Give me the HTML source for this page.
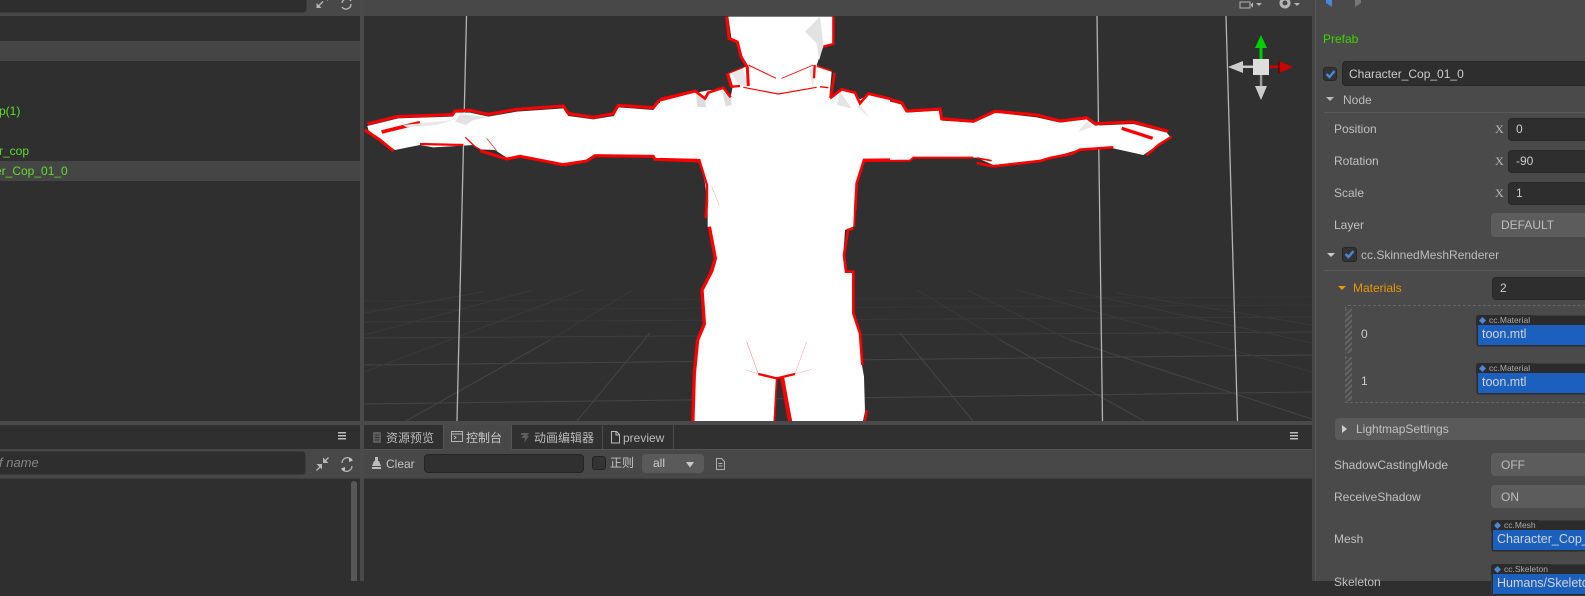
<!DOCTYPE html>
<html><head><meta charset="utf-8">
<style>
*{box-sizing:border-box}
html,body{margin:0;padding:0;background:#2f2f2f}
body{width:1585px;height:581px;overflow:hidden;position:relative;font-family:"Liberation Sans","Noto Sans CJK SC",sans-serif;font-size:12px;color:#ccc}
.a{position:absolute}
.t{position:absolute;white-space:nowrap;line-height:16px;height:16px}
.inp{position:absolute;background:#2e2e2e;border:1px solid #262626;border-radius:4px}
.sel{position:absolute;background:#5c5c5c;border-radius:4px}
.g{color:#62dc2e;font-size:12px}
.asset{position:absolute;background:#2b2b2b;border:1px solid #3a3a3a;border-radius:3px;height:32px}
.tag{position:absolute;left:-1px;top:-1px;height:11px;background:#2b2b2b;border-radius:3px 3px 0 0;font-size:8.5px;line-height:10px;color:#aaa;padding-left:13px}
.tag:before{content:"";position:absolute;left:4px;top:3px;width:5px;height:5px;background:#4d86d8;transform:rotate(45deg)}
.blue{position:absolute;left:1px;top:9px;right:0;height:20px;background:#1a60bc;color:#d3d3d3;font-size:12.5px;line-height:19px;padding-left:4px;white-space:nowrap;overflow:hidden}
svg{position:absolute;overflow:hidden}
</style></head><body>

<!-- left column -->
<div class="a" style="left:0;top:0;width:361px;height:16px;background:#484848"></div>
<div class="inp" style="left:-6px;top:-8px;width:313px;height:21px;background:#2e2e2e;border-color:#3a3a3a"></div>
<div class="a" style="left:0;top:41px;width:360px;height:20px;background:#454545"></div>
<div class="a" style="left:0;top:161px;width:360px;height:20px;background:#454545"></div>
<div class="t g" style="left:-1px;top:103px">p(1)</div>
<div class="t g" style="left:-1px;top:143px">r_cop</div>
<div class="t g" style="left:-5px;top:163px">er_Cop_01_0</div>

<div class="a" style="left:0;top:449px;width:361px;height:30px;background:#484848;border-bottom:1px solid #3e3e3e"></div>
<div class="inp" style="left:-6px;top:451px;width:312px;height:24px;border-color:#3a3a3a"></div>
<div class="t" style="left:-1px;top:455px;color:#858585;font-style:italic;font-size:13px">f name</div>
<div class="a" style="left:351px;top:481px;width:6px;height:100px;background:#585858;border-radius:3px 3px 0 0"></div>

<!-- dividers -->
<div class="a" style="left:360px;top:0;width:4px;height:581px;background:#4a4a4a"></div>
<div class="a" style="left:0;top:421px;width:1312px;height:4px;background:#4a4a4a"></div>

<!-- viewport -->
<div class="a" style="left:364px;top:0;width:948px;height:16px;background:#484848"></div>
<svg style="left:0;top:0" width="1585" height="581" viewBox="0 0 1585 581">
<defs><clipPath id="vp"><rect x="364" y="16" width="948" height="405"/></clipPath></defs>
<g clip-path="url(#vp)">
<rect x="364" y="16" width="948" height="405" fill="#303030"/>
<g fill="none" stroke-width="1">
<path d="M364 404L1312 392M364 365L1312 355" stroke="#454545"/>
<path d="M364 338L1312 332" stroke="#3f3f3f"/>
<path d="M364 322L1312 317" stroke="#3a3a3a"/>
<path d="M364 310L1312 305M364 301L1312 297" stroke="#363636"/>
<path d="M900 333L973 421M1000 340L1144 421M1070 340L1312 419" stroke="#454545"/>
<path d="M917 290L1000 340M967 290L1070 340M1017 290L1312 372M1067 290L1312 343M1117 293L1312 325" stroke="#3a3a3a"/>
<path d="M650 333L577 421M550 340L406 421" stroke="#454545"/>
<path d="M633 290L550 340M583 290L364 372M533 290L364 335M483 292L364 313" stroke="#3a3a3a"/>
</g>
<g stroke="#b4b4b4" stroke-width="1.3" fill="none">
<path d="M466.5 16L457 421M1097 16L1102.5 421M1226 16L1237.5 421"/>
</g>

<!-- left arm (zoom coords) -->
<g transform="translate(360,90) scale(.33333)">
<polygon fill="#fff" points="22,108 115,85 275,80 285,68 330,68 385,80 470,65 612,55 625,78 700,88 762,78 775,52 880,60 895,40 1010,8 1050,0 1080,0 1080,360 1048,360 1045,285 1020,212 885,207 880,198 705,195 680,212 610,220 480,197 440,203 405,180 360,178 340,165 220,172 180,165 105,180 60,150 25,120"/>
<g fill="none" stroke="#f00" stroke-linejoin="miter">
<polyline stroke-width="9" points="22,102 110,80 275,74"/>
<polyline stroke-width="9" points="275,78 285,63 330,61 385,73 470,58 610,48 625,71 700,82 760,71 775,46 880,53 895,34 1010,3"/>
<polyline stroke-width="9" points="14,120 60,150 100,183"/>
<polyline stroke-width="7" points="180,162 310,165"/>
<polyline stroke-width="9" points="360,182 440,207 480,199 610,224 680,213 705,197 880,199 885,208 1018,213 1045,285 1047,360"/>
<polyline stroke-width="11" points="65,126 180,98"/>
<polyline stroke-width="4" points="316,142 345,170 360,178"/>
<polyline stroke-width="2" points="380,145 410,182"/>
</g>
<polygon fill="#e2e2e2" points="285,95 300,72 385,82 340,90 318,105"/>
<polygon fill="#e8e8e8" points="130,105 280,90 230,105 140,112"/>
<polygon fill="#e4e4e4" points="1005,15 1040,50 1010,55"/>
</g>

<!-- right arm -->
<g transform="translate(800,90) scale(.33333)">
<polygon fill="#fff" points="0,0 85,0 90,45 165,40 210,18 305,44 320,68 420,62 425,92 520,98 585,68 710,82 780,98 860,88 885,107 1000,102 1100,128 1110,140 1030,195 940,175 840,178 815,185 750,205 720,212 580,225 530,203 340,203 330,210 190,212 170,260 164,360 0,360"/>
<g fill="none" stroke="#f00">
<polyline stroke-width="9" points="180,42 210,12 305,38 320,63 420,57 425,86 520,94 585,64 710,75 780,93 860,83 885,101 1000,96 1105,124"/>
<polyline stroke-width="7" points="1115,140 1075,165 1040,196"/>
<polyline stroke-width="8" points="940,172 840,179 815,191 750,204 720,213 580,229 530,219"/>
<polyline stroke-width="5" points="530,204 575,212"/>
<polyline stroke-width="6" points="520,203 340,203 330,212 190,213 172,260 164,360"/>
<polyline stroke-width="10" points="965,115 1058,145"/>
</g>
<polygon fill="#e6e6e6" points="835,125 860,95 880,110"/>
<polygon fill="#e4e4e4" points="155,55 185,40 205,85"/>
</g>

<!-- torso -->
<g transform="translate(660,10) scale(.33333)">
<polygon fill="#fff" points="205,20 520,20 518,100 490,110 470,165 515,185 508,262 540,240 585,250 600,268 625,255 690,270 690,450 612,452 590,520 582,600 145,600 135,520 120,452 0,447 0,275 105,248 135,262 150,248 190,237 212,262 218,230 205,190 258,170 245,140 235,100 215,90"/>
<polygon fill="#e2e2e2" points="435,65 480,20 490,105 478,150 470,100"/>
<polygon fill="#e8e8e8" points="215,190 250,178 262,225 235,225"/>
<polygon fill="#dcdcdc" points="108,252 135,262 138,292 112,290"/>
<polygon fill="#dcdcdc" points="186,245 212,262 215,285 198,290"/>
<polygon fill="#e4e4e4" points="540,245 575,295 530,285"/>
<polygon fill="#e8e8e8" points="600,285 630,325 590,290"/>
<polygon fill="#e4e4e4" points="448,180 470,170 458,230"/>
<g fill="none" stroke="#f00">
<polyline stroke-width="9" points="200,20 207,85 232,96 243,140 262,172 265,228"/>
<polyline stroke-width="10" points="202,190 215,232"/>
<polyline stroke-width="4" points="205,190 250,172"/>
<polyline stroke-width="7" points="215,230 240,228"/>
<polyline stroke-width="7" points="520,20 520,102 490,110"/>
<polyline stroke-width="7" points="464,165 462,205"/>
<polyline stroke-width="5" points="470,168 515,183"/>
<polyline stroke-width="8" points="524,188 512,262"/>
<polyline stroke-width="8" points="0,268 105,243 138,268"/>
<polyline stroke-width="8" points="135,265 145,248 190,233 212,262"/>
<polyline stroke-width="8" points="510,265 545,238 585,248 600,280 625,251 690,266"/>
<polyline stroke-width="3" points="265,165 348,205"/>
<polyline stroke-width="2.5" points="365,205 460,165"/>
<polyline stroke-width="3.5" points="250,232 355,252 470,232"/>
<polyline stroke-width="4" points="480,230 505,233"/>
<polyline stroke-width="7" points="0,447 118,450 141,525 141,600"/>
<polyline stroke-width="8" points="690,449 612,450 590,520 586,600"/>
</g>
</g>

<!-- lower -->
<g transform="translate(660,200) scale(.33333)">
<polygon fill="#fff" points="143,0 585,0 580,80 555,90 550,165 555,215 578,215 578,340 600,400 605,490 612,530 615,635 605,680 400,680 370,535 350,535 340,680 100,680 105,520 110,430 135,375 128,270 160,215 170,180 150,85 143,80"/>
<g fill="none" stroke="#f00">
<polyline stroke-width="8" points="141,0 137,55"/>
<polyline stroke-width="10" points="148,80 166,175 153,218 126,270 133,372 113,420 103,520 98,680"/>
<polyline stroke-width="6" points="586,0 583,80"/>
<polyline stroke-width="8" points="580,85 564,90 552,165 558,215 580,215 580,340 600,400 607,495"/>
<polyline stroke-width="7" points="620,630 612,680"/>
<polyline stroke-width="7" points="295,522 350,535 405,522"/>
<polyline stroke-width="5" points="350,535 342,680"/>
<polyline stroke-width="12" points="366,530 393,680"/>
<polyline stroke-width="1.5" stroke-opacity=".55" points="260,425 295,522"/>
<polyline stroke-width="1.5" stroke-opacity=".4" points="405,522 440,425"/>
<polyline stroke-width="1.5" stroke-opacity=".4" points="258,510 295,522"/>
<polyline stroke-width="1.5" stroke-opacity=".4" points="405,522 455,508"/>
<polyline stroke-width="1.5" stroke-opacity=".4" points="155,-40 178,16"/>
</g>
</g>

<!-- gizmo -->
<path d="M1259.5 48h3v11h-3z" fill="#0c0"/>
<path d="M1261 35l6 13h-12z" fill="#00d000"/>
<path d="M1269 65.500h10v2.500h-10z" fill="#c00"/>
<path d="M1279 61l14 6-14 6z" fill="#cd0000"/>
<path d="M1279 61v12" stroke="#400" stroke-width="1"/>
<path d="M1243 65.500h10v2.500h-10z" fill="#ccc"/>
<path d="M1228 67l15-6v12z" fill="#ccc"/>
<path d="M1259.800 75h2.500v11h-2.500z" fill="#999"/>
<path d="M1255 86h12l-6 14z" fill="#ccc"/>
<rect x="1253" y="59" width="16" height="16" fill="#ddd"/>
</g>

<!-- viewport toolbar icons -->
<g fill="#b5b5b5">
<path d="M1240 2h10v6h-10z" fill="none" stroke="#b5b5b5"/>
<path d="M1251 4l2-1.500v5l-2-1.500z"/>
<path d="M1256 3h6l-3 3z"/>
<circle cx="1285" cy="3" r="4" fill="none" stroke="#b5b5b5" stroke-width="3"/>
<path d="M1294 3h6l-3 3z"/>
</g>
</svg>

<!-- bottom tabs -->
<div class="a" style="left:364px;top:425px;width:948px;height:24px;background:#303030"></div>
<div class="a" style="left:443px;top:425px;width:69px;height:25px;background:#484848;border-left:1px solid #555;border-right:1px solid #555"></div>
<div class="a" style="left:602px;top:425px;width:1px;height:24px;background:#4e4e4e"></div>
<div class="a" style="left:673px;top:425px;width:1px;height:24px;background:#4e4e4e"></div>
<div class="a" style="left:364px;top:449px;width:948px;height:30px;background:#484848;border-bottom:1px solid #3e3e3e"></div>
<div class="a" style="left:364px;top:449px;width:79px;height:1px;background:#555"></div>
<div class="a" style="left:512px;top:449px;width:800px;height:1px;background:#555"></div>
<div class="t" style="left:386px;top:430px;color:#bbb">资源预览</div>
<div class="t" style="left:466px;top:430px;color:#c8c8c8">控制台</div>
<div class="t" style="left:534px;top:430px;color:#bbb">动画编辑器</div>
<div class="t" style="left:623px;top:430px;color:#bbb">preview</div>
<div class="t" style="left:386px;top:456px;color:#c4c4c4">Clear</div>
<div class="inp" style="left:424px;top:454px;width:160px;height:19px;background:#303030"></div>
<div class="a" style="left:592px;top:456px;width:14px;height:14px;border:1px solid #242424;background:#333;border-radius:3px"></div>
<div class="t" style="left:610px;top:455px;color:#c4c4c4">正则</div>
<div class="sel" style="left:642px;top:454px;width:62px;height:19px;background:#5a5a5a"></div>
<div class="t" style="left:653px;top:455px;color:#ccc">all</div>

<svg style="left:0;top:0;pointer-events:none" width="1585" height="581" viewBox="0 0 1585 581">
<g fill="#b8b8b8">
<!-- expand top -->
<path d="M316.500 8V3l5 5z"/>
<path d="M328-4v5l-5-5z"/>
<!-- compress lower -->
<path d="M322 464v5.500l-5.500-5.500z"/>
<path d="M323 463v-5.500l5.500 5.500z"/>
</g>
<g fill="none" stroke="#b8b8b8" stroke-width="1.3">
<path d="M318 6.500L323 1.500"/>
<path d="M320 467L316.500 470.500M325 461L328.500 457.500"/>
<path d="M342 3a5 5 0 0 1 9-2M351 4a5 5 0 0 1-9 3"/>
<path d="M342 463a5.500 5.500 0 0 1 10-3M352 466a5.500 5.500 0 0 1-10 3"/>
</g>
<g fill="#c4c4c4"><path d="M349 458l4 2.500-4 1.500zM345 471l-4-2.500 4-1.500z"/></g>
<g fill="#bcbcbc">
<rect x="338" y="432" width="8" height="1.500"/><rect x="338" y="435" width="8" height="1.500"/><rect x="338" y="438" width="8" height="1.500"/>
<rect x="1290" y="432" width="8" height="1.500"/><rect x="1290" y="435" width="8" height="1.500"/><rect x="1290" y="438" width="8" height="1.500"/>
<!-- broom -->
<path d="M375 457h3v4h-3zM374 461h5l2 5h-9zM372 467h9v2h-9z"/>
<path d="M686 462h8l-4 5.500z" fill="#c9c9c9"/>
</g>
<!-- tab icons -->
<rect x="373" y="432" width="8" height="11" rx="1" fill="#5c5c5c"/>
<path d="M375 435h4M375 437.500h4M375 440h4" stroke="#333" stroke-width="1"/>
<rect x="451.500" y="431.500" width="11" height="10" fill="none" stroke="#b5b5b5"/>
<path d="M451 434h12" stroke="#b5b5b5"/>
<path d="M454 436l2 1.500-2 1.500" fill="none" stroke="#b5b5b5"/>
<path d="M521 433h8l-2 3h2l-5 7 1-5h-4l3-3h-3z" fill="#5e5e5e"/>
<path d="M611.500 431.500h5l3 3v8.500h-8z M616 431.500v3.500h3.500" fill="none" stroke="#bbb"/>
<path d="M716.500 458.500h5l3 3v8h-8z M718.500 463.500h4M718.500 466h4" fill="none" stroke="#b0b0b0"/>
</svg>

<!-- inspector -->
<div class="a" style="left:1312px;top:0;width:3px;height:581px;background:#464646"></div>
<div class="a" style="left:1315px;top:0;width:1px;height:581px;background:#575757"></div>
<div class="a" style="left:1316px;top:0;width:269px;height:581px;background:#4a4a4a"></div>
<div class="t" style="left:1323px;top:31px;color:#3dd400">Prefab</div>
<div class="a" style="left:1323px;top:67px;width:14px;height:14px;background:#333;border:1px solid #262626;border-radius:3px"></div>
<div class="inp" style="left:1342px;top:61px;width:260px;height:25px"></div>
<div class="t" style="left:1349px;top:66px;color:#ccc">Character_Cop_01_0</div>
<div class="t" style="left:1343px;top:92px;color:#bbb">Node</div>
<div class="a" style="left:1324px;top:112px;width:261px;height:1px;background:#5a5a5a"></div>

<div class="t" style="left:1334px;top:121px;color:#c0c0c0">Position</div>
<div class="t" style="left:1334px;top:153px;color:#c0c0c0">Rotation</div>
<div class="t" style="left:1334px;top:185px;color:#c0c0c0">Scale</div>
<div class="t" style="left:1334px;top:217px;color:#c0c0c0">Layer</div>
<div class="t" style="left:1495px;top:121px;font-family:'Liberation Serif',serif;font-size:12px;color:#bbb">X</div>
<div class="t" style="left:1495px;top:153px;font-family:'Liberation Serif',serif;font-size:12px;color:#bbb">X</div>
<div class="t" style="left:1495px;top:185px;font-family:'Liberation Serif',serif;font-size:12px;color:#bbb">X</div>
<div class="inp" style="left:1508px;top:118px;width:100px;height:23px"></div>
<div class="inp" style="left:1508px;top:150px;width:100px;height:23px"></div>
<div class="inp" style="left:1508px;top:182px;width:100px;height:23px"></div>
<div class="t" style="left:1516px;top:121px">0</div>
<div class="t" style="left:1516px;top:153px">-90</div>
<div class="t" style="left:1516px;top:185px">1</div>
<div class="sel" style="left:1491px;top:213px;width:110px;height:24px"></div>
<div class="t" style="left:1501px;top:217px;color:#bdbdbd">DEFAULT</div>

<div class="a" style="left:1342px;top:247px;width:15px;height:15px;background:#333;border:1px solid #262626;border-radius:3px"></div>
<div class="t" style="left:1361px;top:247px;color:#bdbdbd">cc.SkinnedMeshRenderer</div>
<div class="a" style="left:1324px;top:270px;width:261px;height:1px;background:#5a5a5a"></div>
<div class="t" style="left:1353px;top:280px;color:#e8960c">Materials</div>
<div class="inp" style="left:1492px;top:277px;width:100px;height:23px"></div>
<div class="t" style="left:1500px;top:280px">2</div>
<div class="a" style="left:1345px;top:305px;width:245px;height:98px;border:1px dashed #666;border-right:0;border-radius:3px 0 0 0"></div>
<div class="a" style="left:1345px;top:309px;width:7px;height:44px;background:repeating-linear-gradient(135deg,#646464 0 2px,#4a4a4a 2px 4px)"></div>
<div class="a" style="left:1345px;top:357px;width:7px;height:44px;background:repeating-linear-gradient(135deg,#646464 0 2px,#4a4a4a 2px 4px)"></div>
<div class="t" style="left:1361px;top:326px">0</div>
<div class="t" style="left:1361px;top:373px">1</div>
<div class="asset" style="left:1476px;top:315px;width:115px"><div class="tag" style="width:58px">cc.Material</div><div class="blue">toon.mtl</div></div>
<div class="asset" style="left:1476px;top:363px;width:115px"><div class="tag" style="width:58px">cc.Material</div><div class="blue">toon.mtl</div></div>

<div class="a" style="left:1335px;top:418px;width:255px;height:22px;background:#5a5a5a;border-radius:4px"></div>
<div class="t" style="left:1356px;top:421px;color:#c0c0c0">LightmapSettings</div>

<div class="t" style="left:1334px;top:457px;color:#c0c0c0">ShadowCastingMode</div>
<div class="t" style="left:1334px;top:489px;color:#c0c0c0">ReceiveShadow</div>
<div class="t" style="left:1334px;top:531px;color:#c0c0c0">Mesh</div>
<div class="t" style="left:1334px;top:574px;color:#c0c0c0">Skeleton</div>
<div class="sel" style="left:1491px;top:453px;width:110px;height:23px"></div>
<div class="t" style="left:1501px;top:457px;color:#bdbdbd">OFF</div>
<div class="sel" style="left:1491px;top:485px;width:110px;height:23px"></div>
<div class="t" style="left:1501px;top:489px;color:#bdbdbd">ON</div>
<div class="asset" style="left:1491px;top:520px;width:100px"><div class="tag" style="width:49px">cc.Mesh</div><div class="blue">Character_Cop_01_0</div></div>
<div class="asset" style="left:1491px;top:564px;width:100px"><div class="tag" style="width:61px">cc.Skeleton</div><div class="blue">Humans/Skeleton</div></div>

<svg style="left:1316px;top:0" width="269" height="581" viewBox="1316 0 269 581">
<path d="M1332 0v7l-6-4v-3z" fill="#4d86d8"/>
<path d="M1355 0v7l6-4v-3z" fill="#777"/>
<path d="M1326 97h8l-4 4z" fill="#bbb"/>
<path d="M1327 253h8l-4 4z" fill="#ccc"/>
<path d="M1338 286h8l-4 4z" fill="#e8960c"/>
<path d="M1342 425v8l5-4z" fill="#ccc"/>
<path d="M1326.500 74l3 3 5-6" fill="none" stroke="#4a86dc" stroke-width="2.4"/>
<path d="M1345.500 254l3 3 5-6" fill="none" stroke="#4a86dc" stroke-width="2.4"/>
</svg>
</body></html>
